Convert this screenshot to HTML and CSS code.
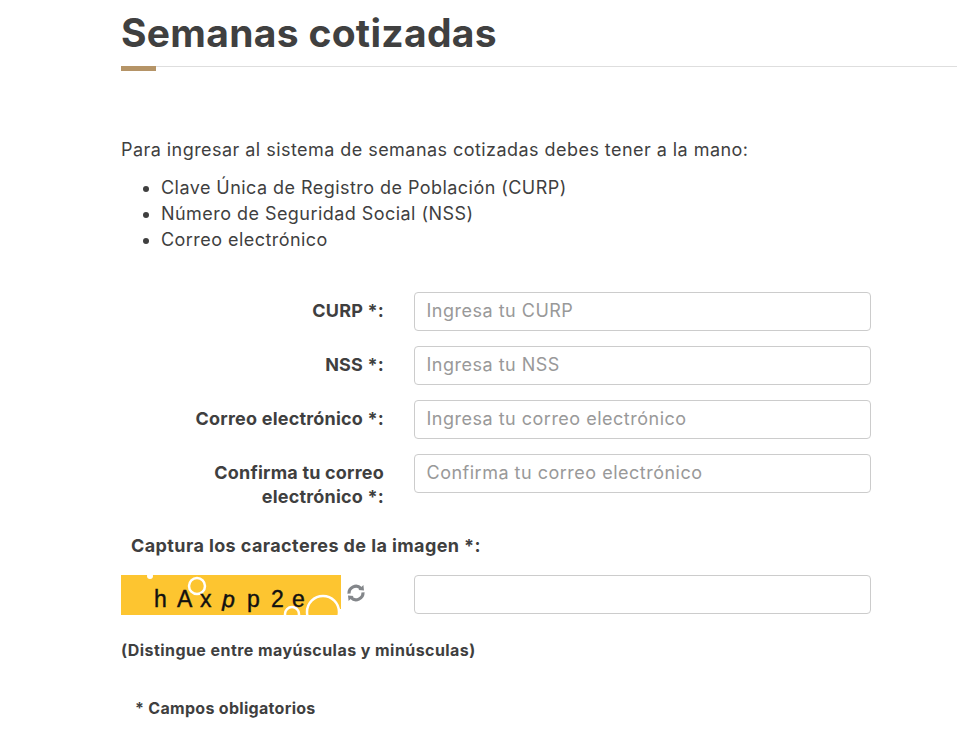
FILE: index.html
```html
<!DOCTYPE html>
<html lang="es">
<head>
<meta charset="utf-8">
<title>Semanas cotizadas</title>
<link rel="stylesheet" href="styles.css">
</head>
<body>
<main class="page">
  <h1 class="title">Semanas cotizadas</h1>
  <div class="rule"><span class="rule-accent"></span></div>
  <p class="intro">Para ingresar al sistema de semanas cotizadas debes tener a la mano:</p>
  <ul class="reqs">
    <li>Clave Única de Registro de Población (CURP)</li>
    <li>Número de Seguridad Social (NSS)</li>
    <li>Correo electrónico</li>
  </ul>
  <form class="form">
    <div class="row">
      <label class="label" for="curp">CURP *:</label>
      <input class="input" id="curp" type="text" placeholder="Ingresa tu CURP">
    </div>
    <div class="row">
      <label class="label" for="nss">NSS *:</label>
      <input class="input" id="nss" type="text" placeholder="Ingresa tu NSS">
    </div>
    <div class="row">
      <label class="label" for="mail">Correo electrónico *:</label>
      <input class="input" id="mail" type="text" placeholder="Ingresa tu correo electrónico">
    </div>
    <div class="row">
      <label class="label" for="mail2">Confirma tu correo electrónico *:</label>
      <input class="input" id="mail2" type="text" placeholder="Confirma tu correo electrónico">
    </div>
    <p class="captcha-title">Captura los caracteres de la imagen *:</p>
    <div class="captcha-row">
      <div class="captcha-side">
        <svg class="captcha" viewBox="0 0 220 41" width="220" height="41" aria-label="captcha">
          <rect x="0" y="1" width="220" height="40" fill="#fdc530"/>
          <rect x="218" y="35" width="2" height="6" fill="#fff"/>
          <circle cx="29" cy="2" r="3" fill="#fff"/>
          <circle cx="76" cy="12" r="8" fill="none" stroke="#fff" stroke-width="2.5"/>
          <circle cx="202" cy="38" r="16" fill="none" stroke="#fff" stroke-width="2.5"/>
          <circle cx="171" cy="40" r="7" fill="none" stroke="#fff" stroke-width="2.5"/>
          <g class="captcha-text">
            <text x="33" y="33">h</text>
            <text x="56" y="33">A</text>
            <text x="79" y="33">x</text>
            <text x="101" y="33" transform="rotate(12 108 28)">p</text>
            <text x="126" y="33">p</text>
            <text x="150" y="33">2</text>
            <text x="171" y="33">e</text>
          </g>
        </svg>
        <svg class="refresh" viewBox="0 0 20 20" width="20" height="20" aria-label="Recargar">
          <path d="M3 10.6A7 7 0 0 1 14.9 5.3M17 9.4A7 7 0 0 1 5.1 14.7" fill="none" stroke="#83868a" stroke-width="3.2"/>
          <path d="M12.4 7 18 7.6 17.4 2ZM7.6 13 2 12.4 2.6 18Z" fill="#83868a"/>
        </svg>
      </div>
      <input class="input" type="text" aria-label="Caracteres de la imagen">
    </div>
    <p class="hint">(Distingue entre mayúsculas y minúsculas)</p>
    <p class="required">* Campos obligatorios</p>
  </form>
</main>
</body>
</html>
```
FILE: styles.css
```css
html, body {
  margin: 0;
  padding: 0;
  background: #fff;
}
body {
  font-family: "Inter", "Open Sans", sans-serif;
  color: #3f3f3f;
  overflow: hidden;
}
.page {
  padding: 9px 0 0 121px;
  height: 726px;
}
.title {
  margin: 0;
  font-size: 39px;
  line-height: 47px;
  font-weight: 700;
  color: #404040;
  letter-spacing: 0.3px;
}
.rule {
  margin-top: 10px;
  height: 1px;
  background: #dedede;
  position: relative;
}
.rule-accent {
  position: absolute;
  left: 0;
  top: 0;
  width: 35px;
  height: 5px;
  background: #b59467;
}
.intro {
  margin: 71px 0 0;
  font-size: 18px;
  line-height: 24px;
  letter-spacing: 0.45px;
}
.reqs {
  margin: 13px 0 0;
  padding: 0 0 0 40px;
  font-size: 18px;
  line-height: 26px;
  letter-spacing: 0.45px;
}
.form {
  margin-top: 39px;
  width: 750px;
}
.row {
  display: grid;
  grid-template-columns: 263px 457px;
  column-gap: 30px;
  margin-bottom: 15px;
  align-items: start;
}
.label {
  text-align: right;
  font-size: 18px;
  font-weight: 700;
  line-height: 24px;
  letter-spacing: 0.2px;
  padding-top: 7px;
}
.input {
  box-sizing: border-box;
  width: 457px;
  height: 39px;
  border: 1px solid #ccc;
  border-radius: 4px;
  padding: 0 12px 2px 11.5px;
  font: 18px "Inter", "Open Sans", sans-serif;
  letter-spacing: 0.5px;
  color: #3f3f3f;
  background: #fff;
}
.input::placeholder {
  color: #999;
  opacity: 1;
}
.captcha-title {
  margin: 24px 0 0 10px;
  font-size: 18px;
  font-weight: 700;
  line-height: 25px;
  letter-spacing: 0.4px;
}
.captcha-row {
  display: grid;
  grid-template-columns: 263px 457px;
  column-gap: 30px;
  margin-top: 17px;
}
.captcha-side {
  display: flex;
  align-items: flex-start;
  gap: 5px;
}
.captcha {
  display: block;
  margin-top: -1px;
}
.refresh {
  margin-top: 8px;
}
.captcha-text text {
  font-family: "Liberation Sans", sans-serif;
  font-size: 23px;
  fill: #111;
  stroke: #111;
  stroke-width: 0.4px;
}
.hint {
  margin: 24px 0 0;
  font-size: 16px;
  font-weight: 700;
  line-height: 22px;
  letter-spacing: 0.44px;
}
.required {
  margin: 36px 0 0 14px;
  font-size: 16px;
  font-weight: 700;
  line-height: 22px;
  letter-spacing: 0.3px;
}
```
